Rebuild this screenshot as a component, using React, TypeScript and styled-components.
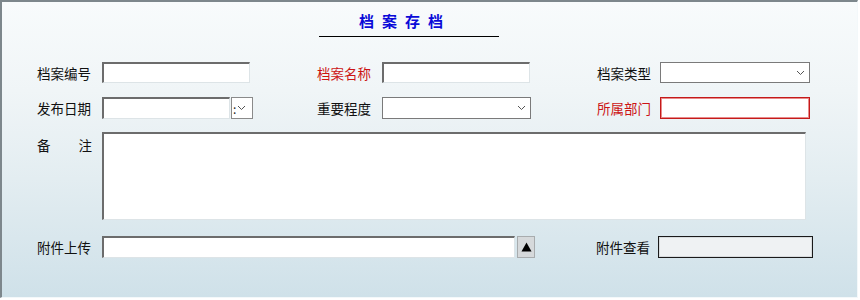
import React from "react";
import styled, { createGlobalStyle } from "styled-components";

const GlobalStyle = createGlobalStyle`
  html, body {
    margin: 0;
    padding: 0;
    background: #ffffff;
  }
  body {
    font-family: "Noto Sans CJK SC", "Liberation Sans", sans-serif;
  }
`;

const Panel = styled.div`
  width: 858px;
  height: 298px;
  box-sizing: border-box;
  border-top: 2px solid #7d878c;
  border-left: 2px solid #7d878c;
  border-right: 1px solid #f3f8fa;
  border-bottom: 1px solid #f3f8fa;
  background: linear-gradient(
    to bottom,
    #f8fbfc 0%,
    #f0f5f7 30%,
    #e3edf1 60%,
    #cfe1e9 100%
  );
  padding: 9px 0 0 35px;
`;

const Title = styled.div`
  width: 180px;
  margin-left: 282px;
  box-sizing: border-box;
  padding: 0 8px 5px 0;
  border-bottom: 1px solid #000;
  text-align: center;
  font-size: 15px;
  line-height: 20px;
  font-weight: bold;
  letter-spacing: 8px;
  color: #0a0ad8;
`;

const Row = styled.div<{ h: number; top: number }>`
  display: flex;
  height: ${(p) => p.h}px;
  margin-top: ${(p) => p.top}px;
`;

const Field = styled.div<{ w: number; alignTop?: boolean }>`
  display: flex;
  flex-shrink: 0;
  align-items: ${(p) => (p.alignTop ? "flex-start" : "center")};
  width: ${(p) => p.w}px;
  height: 100%;
`;

const Label = styled.div<{ w: number; red?: boolean; top?: number }>`
  width: ${(p) => p.w}px;
  flex-shrink: 0;
  font-size: 13.5px;
  line-height: 16px;
  color: ${(p) => (p.red ? "#cc1414" : "#111")};
  padding-top: ${(p) => p.top ?? 0}px;
`;

const SpreadLabel = styled.div`
  display: flex;
  justify-content: space-between;
  width: 55px;
`;

const TextInput = styled.div<{ w: number }>`
  width: ${(p) => p.w}px;
  flex-shrink: 0;
  height: 100%;
  box-sizing: border-box;
  background: #fff;
  border-top: 2px solid #6c6c6c;
  border-left: 2px solid #6c6c6c;
  border-right: 1px solid #dde4e7;
  border-bottom: 1px solid #dde4e7;
`;

const RequiredInput = styled.div<{ w: number }>`
  width: ${(p) => p.w}px;
  flex-shrink: 0;
  height: 100%;
  box-sizing: border-box;
  background: #fff;
  border: 1px solid #c41a1a;
  box-shadow: inset 0 0 0 1px #e98a8a;
`;

const SelectBox = styled.div<{ w: number }>`
  width: ${(p) => p.w}px;
  flex-shrink: 0;
  height: 100%;
  box-sizing: border-box;
  background: #fff;
  border: 1px solid #7a7a7a;
  display: flex;
  align-items: center;
  justify-content: flex-end;
  padding-right: 4px;
`;

const TimeButton = styled.div`
  width: 22px;
  flex-shrink: 0;
  height: 100%;
  box-sizing: border-box;
  margin-left: 1px;
  background: #fff;
  border: 1px solid #8a8a8a;
  display: flex;
  align-items: center;
  padding-left: 1px;
  gap: 1px;
  font-size: 12px;
  color: #222;
`;

const UploadButton = styled.div`
  width: 18px;
  flex-shrink: 0;
  height: 22px;
  box-sizing: border-box;
  margin-left: 2px;
  background: #d6d9db;
  border: 1px solid #a8acae;
  display: flex;
  align-items: center;
  justify-content: center;
`;

const ViewBox = styled.div<{ w: number }>`
  width: ${(p) => p.w}px;
  flex-shrink: 0;
  height: 100%;
  box-sizing: border-box;
  background: #eff2f3;
  border: 1px solid #1a1a1a;
  box-shadow: inset 0 0 0 1px #d8dcde;
`;

const Chevron = () => (
  <svg width="9" height="6" viewBox="0 0 9 6">
    <path d="M1 1 L4.5 4.5 L8 1" fill="none" stroke="#555" strokeWidth="1" />
  </svg>
);

const UpTriangle = () => (
  <svg width="11" height="10" viewBox="0 0 11 10">
    <path d="M5.5 0.5 L10.5 9.5 L0.5 9.5 Z" fill="#000" />
  </svg>
);

export default function App() {
  return (
    <>
      <GlobalStyle />
      <Panel>
        <Title>档案存档</Title>

        <Row h={21} top={25}>
          <Field w={280}>
            <Label w={65}>档案编号</Label>
            <TextInput w={148} />
          </Field>
          <Field w={280}>
            <Label w={65} red>档案名称</Label>
            <TextInput w={148} />
          </Field>
          <Field w={260}>
            <Label w={63}>档案类型</Label>
            <SelectBox w={150}>
              <Chevron />
            </SelectBox>
          </Field>
        </Row>

        <Row h={22} top={14}>
          <Field w={280}>
            <Label w={65}>发布日期</Label>
            <TextInput w={128} />
            <TimeButton>
              <span>:</span>
              <Chevron />
            </TimeButton>
          </Field>
          <Field w={280}>
            <Label w={65}>重要程度</Label>
            <SelectBox w={149}>
              <Chevron />
            </SelectBox>
          </Field>
          <Field w={260}>
            <Label w={63} red>所属部门</Label>
            <RequiredInput w={150} />
          </Field>
        </Row>

        <Row h={88} top={13}>
          <Field w={780} alignTop>
            <Label w={65} top={5}>
              <SpreadLabel>
                <span>备</span>
                <span>注</span>
              </SpreadLabel>
            </Label>
            <TextInput w={704} />
          </Field>
        </Row>

        <Row h={22} top={16}>
          <Field w={559}>
            <Label w={65}>附件上传</Label>
            <TextInput w={413} />
            <UploadButton>
              <UpTriangle />
            </UploadButton>
          </Field>
          <Field w={230}>
            <Label w={62}>附件查看</Label>
            <ViewBox w={155} />
          </Field>
        </Row>
      </Panel>
    </>
  );
}
